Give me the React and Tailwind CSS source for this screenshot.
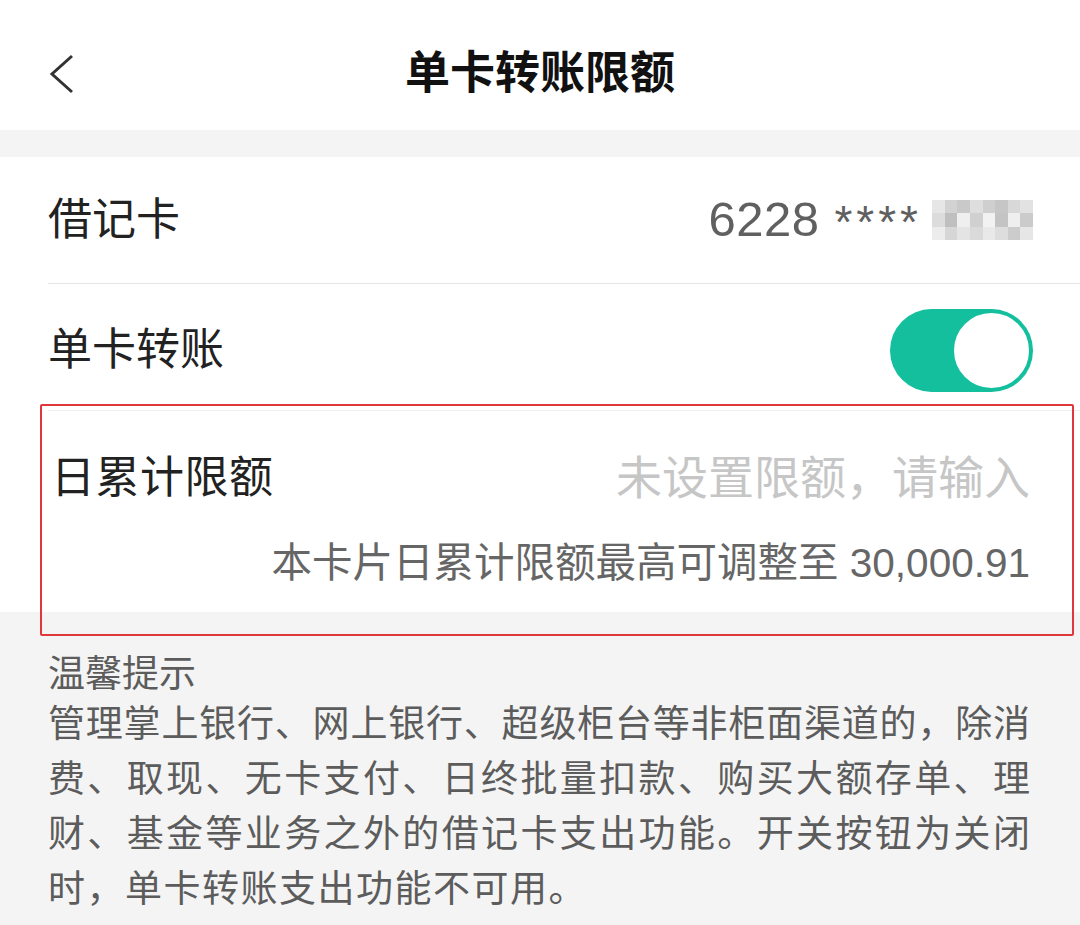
import React from 'react'

const mosaic = [
  'bg-[#e6e6e6]', 'bg-[#d2d2d2]', 'bg-[#c9c9c9]', 'bg-[#dedede]', 'bg-[#cfcfcf]', 'bg-[#c6c6c6]', 'bg-[#d8d8d8]', 'bg-[#e2e2e2]',
  'bg-[#dcdcdc]', 'bg-[#bfbfbf]', 'bg-[#efefef]', 'bg-[#d0d0d0]', 'bg-[#f2f2f2]', 'bg-[#c4c4c4]', 'bg-[#efefef]', 'bg-[#cbcbcb]',
  'bg-[#ececec]', 'bg-[#d6d6d6]', 'bg-[#e4e4e4]', 'bg-[#dadada]', 'bg-[#e9e9e9]', 'bg-[#dddddd]', 'bg-[#cccccc]', 'bg-[#e6e6e6]',
]

function Toggle() {
  return (
    <div className="w-[143px] h-[83px] rounded-full bg-[#14bf9e] flex items-center justify-end pr-[1px]">
      <div className="w-[81px] h-[81px] rounded-full bg-white border-[3px] border-[#14bf9e]" />
    </div>
  )
}

export default function App() {
  const font = { fontFamily: '"Liberation Sans", "Noto Sans CJK SC", sans-serif' }
  return (
    <div className="relative w-[1080px] h-[925px] bg-[#f4f4f4] overflow-hidden" style={font}>
      {/* Header */}
      <div className="h-[130px] bg-white flex items-center relative">
        <div className="w-full flex items-center justify-center pt-[16px]">
          <span className="text-[45px] font-bold text-[#111] leading-none">单卡转账限额</span>
        </div>
        <svg className="absolute left-[48px] top-[54px]" width="28" height="40" viewBox="0 0 28 40" fill="none">
          <polyline points="24,2 4,20 24,38" stroke="#333" strokeWidth="3" strokeLinejoin="miter" />
        </svg>
      </div>

      <div className="h-[27px]" />

      {/* Card */}
      <div className="bg-white">
        <div className="h-[126px] flex items-center justify-between pl-[48px] pr-[47px]">
          <span className="text-[44px] text-[#222]">借记卡</span>
          <div className="flex items-center text-[#606060]">
            <span className="text-[49px] tracking-[0.5px]">6228</span>
            <span className="ml-[15px] text-[46px] tracking-[4px] pt-[4px]">****</span>
            <div className="ml-[10px] grid grid-cols-8 w-[101px] h-[40px]">
              {mosaic.map((c, i) => (
                <div key={i} className={c} />
              ))}
            </div>
          </div>
        </div>
        <div className="ml-[48px] border-t border-[#e6e6e6]" />
        <div className="h-[126px] flex items-center justify-between pl-[48px] pr-[47px] pt-[6px]">
          <span className="text-[44px] text-[#222]">单卡转账</span>
          <Toggle />
        </div>
        <div className="ml-[48px] border-t border-[#f0f0f0]" />
        <div className="pl-[51px] pr-[50px] pt-[39px] pb-[25px]">
          <div className="flex items-center justify-between h-[56px]">
            <span className="text-[44px] text-[#222] tracking-[0.5px]">日累计限额</span>
            <span className="text-[46px] text-[#c6c6c6]">未设置限额，请输入</span>
          </div>
          <div className="mt-[33px] h-[48px] flex items-center justify-end">
            <span className="text-[40.5px] text-[#666]">本卡片日累计限额最高可调整至 30,000.91</span>
          </div>
        </div>
      </div>

      {/* Tips */}
      <div className="pl-[48px] pr-[50px] pt-[41px] text-[#5c5c5c]">
        <div className="text-[37px] leading-[44px]">温馨提示</div>
        <div className="text-[37px] leading-[55px]">
          <div className="whitespace-nowrap text-justify [text-align-last:justify]">管理掌上银行、网上银行、超级柜台等非柜面渠道的，除消</div>
          <div className="whitespace-nowrap text-justify [text-align-last:justify]">费、取现、无卡支付、日终批量扣款、购买大额存单、理</div>
          <div className="whitespace-nowrap text-justify [text-align-last:justify]">财、基金等业务之外的借记卡支出功能。开关按钮为关闭</div>
          <div className="whitespace-nowrap tracking-[1.5px]">时，单卡转账支出功能不可用。</div>
        </div>
      </div>

      {/* Red highlight box */}
      <div className="absolute left-[40px] top-[404px] w-[1034px] h-[232px] border-2 border-[#e0383a] rounded-[2px]" />
    </div>
  )
}
